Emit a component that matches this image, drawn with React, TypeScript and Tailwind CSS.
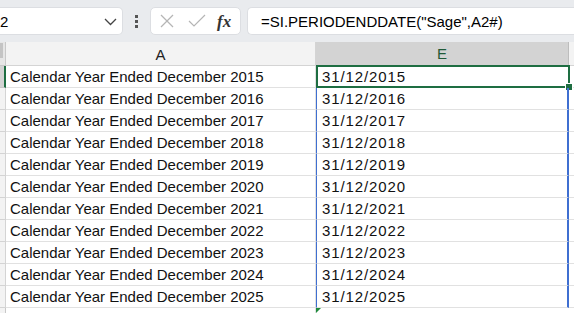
const rows = [2015, 2016, 2017, 2018, 2019, 2020, 2021, 2022, 2023, 2024, 2025];

const font = { fontFamily: '"Liberation Sans", Arial, sans-serif' };

const App = () => {
  return (
    <div className="w-[574px] h-[313px] overflow-hidden bg-white text-[#000]" style={font}>
      {/* formula bar */}
      <div className="h-[42px] bg-[#e9ebee] flex items-start pt-[7px]">
        <div className="w-[123px] h-[28px] bg-white rounded-r-[5px] border border-l-0 border-[#dcdee2] flex items-center justify-between pr-[5px]">
          <span className="text-[15px] leading-none">2</span>
          <svg width="13" height="8" viewBox="0 0 13 8" className="mt-[1px]">
            <polyline points="1,1 6.5,6.5 12,1" fill="none" stroke="#444" strokeWidth="1.3" />
          </svg>
        </div>
        <div className="w-[27px] h-[28px] flex flex-col items-center justify-center gap-[2px]">
          <div className="w-[3px] h-[3px] bg-[#555]" />
          <div className="w-[3px] h-[3px] bg-[#555]" />
          <div className="w-[3px] h-[3px] bg-[#555]" />
        </div>
        <div className="w-[91px] h-[28px] bg-white rounded-[5px] border border-[#dcdee2] flex items-center pl-[9px]">
          <svg width="14" height="14" viewBox="0 0 14 14">
            <line x1="1" y1="1" x2="13" y2="13" stroke="#b5b5b5" strokeWidth="1.2" />
            <line x1="13" y1="1" x2="1" y2="13" stroke="#b5b5b5" strokeWidth="1.2" />
          </svg>
          <svg width="18" height="14" viewBox="0 0 18 14" className="ml-[14px]">
            <polyline points="1,7 6,12 17,1" fill="none" stroke="#b5b5b5" strokeWidth="1.2" />
          </svg>
          <span
            className="ml-[11px] text-[17px] italic font-bold text-[#333] leading-none"
            style={{ fontFamily: '"Liberation Serif", "Times New Roman", serif' }}
          >
            fx
          </span>
        </div>
        <div className="ml-[6px] flex-1 h-[28px] bg-white rounded-l-[5px] border border-r-0 border-[#dcdee2] flex items-center pl-[13px]">
          <span className="text-[15px] leading-none">=SI.PERIODENDDATE("Sage",A2#)</span>
        </div>
      </div>

      {/* grid */}
      <div className="grid grid-cols-[6px_310px_253px_1fr]">
        {/* header row */}
        <div className="h-[24px] bg-[#e6e6e6] border-b border-r border-[#c8c8c8] relative">
          <div className="absolute left-0 top-[1px] w-[3px] h-[15px] bg-[#c4c4c4]" />
        </div>
        <div className="h-[24px] bg-[#f3f3f3] border-b border-r border-[#d4d4d4] flex items-center justify-center pt-[3px] text-[15px] text-[#222]">
          A
        </div>
        <div className="h-[24px] bg-[#d3d3d3] border-b-2 border-r border-b-[#d3d3d3] border-r-[#bdbdbd] flex items-center justify-center pt-[3px] text-[15px] text-[#1f5a38]">
          E
        </div>
        <div className="h-[24px] bg-[#f3f3f3] border-b border-[#d4d4d4]" />

        {rows.map((y, i) => (
          <Row key={y} year={y} first={i === 0} />
        ))}

        {/* partial row below */}
        <div className="h-[10px] bg-[#f3f3f3] border-r border-[#c8c8c8]" />
        <div className="h-[10px] border-r border-[#e1e1e1]" />
        <div className="h-[10px] relative">
          <div className="absolute left-0 top-0 w-0 h-0 border-t-[5px] border-r-[5px] border-t-[#1e8a3c] border-r-transparent" />
        </div>
        <div className="h-[10px]" />
      </div>
    </div>
  );
};

const Row = ({ year, first }: { year: number; first: boolean }) => {
  return (
    <>
      <div
        className={
          first
            ? "h-[22px] bg-[#d3d3d3] border-b border-[#c8c8c8] border-r-2 border-r-[#1e6e42]"
            : "h-[22px] bg-[#f3f3f3] border-b border-r border-[#d4d4d4]"
        }
      />
      <div className="h-[22px] border-b border-r border-[#e1e1e1] flex items-center pl-[4px] pt-[2px] text-[15px] text-[#111]">
        Calendar Year Ended December {year}
      </div>
      <div
        className={
          first
            ? "h-[22px] relative border-b border-[#e1e1e1] flex items-center pl-[6px] pt-[2px] text-[15px] text-[#111]"
            : "h-[22px] relative border-b border-[#e1e1e1] border-l border-l-[#3f6fd1] border-r-2 border-r-[#3f6fd1] flex items-center pl-[5px] pt-[2px] text-[15px] text-[#111]"
        }
      >
        <span className="tracking-[0.9px]">31/12/{year}</span>
        {first && (
          <>
            <div className="absolute left-0 top-[-1px] right-[-1px] bottom-[-1px] border-2 border-[#1e6e42]" />
            <div className="absolute right-[-4px] bottom-[-4px] w-[6px] h-[6px] bg-[#1e6e42] border border-white box-content" />
          </>
        )}
      </div>
      <div className="h-[22px] border-b border-[#e1e1e1]" />
    </>
  );
};

export default App;
